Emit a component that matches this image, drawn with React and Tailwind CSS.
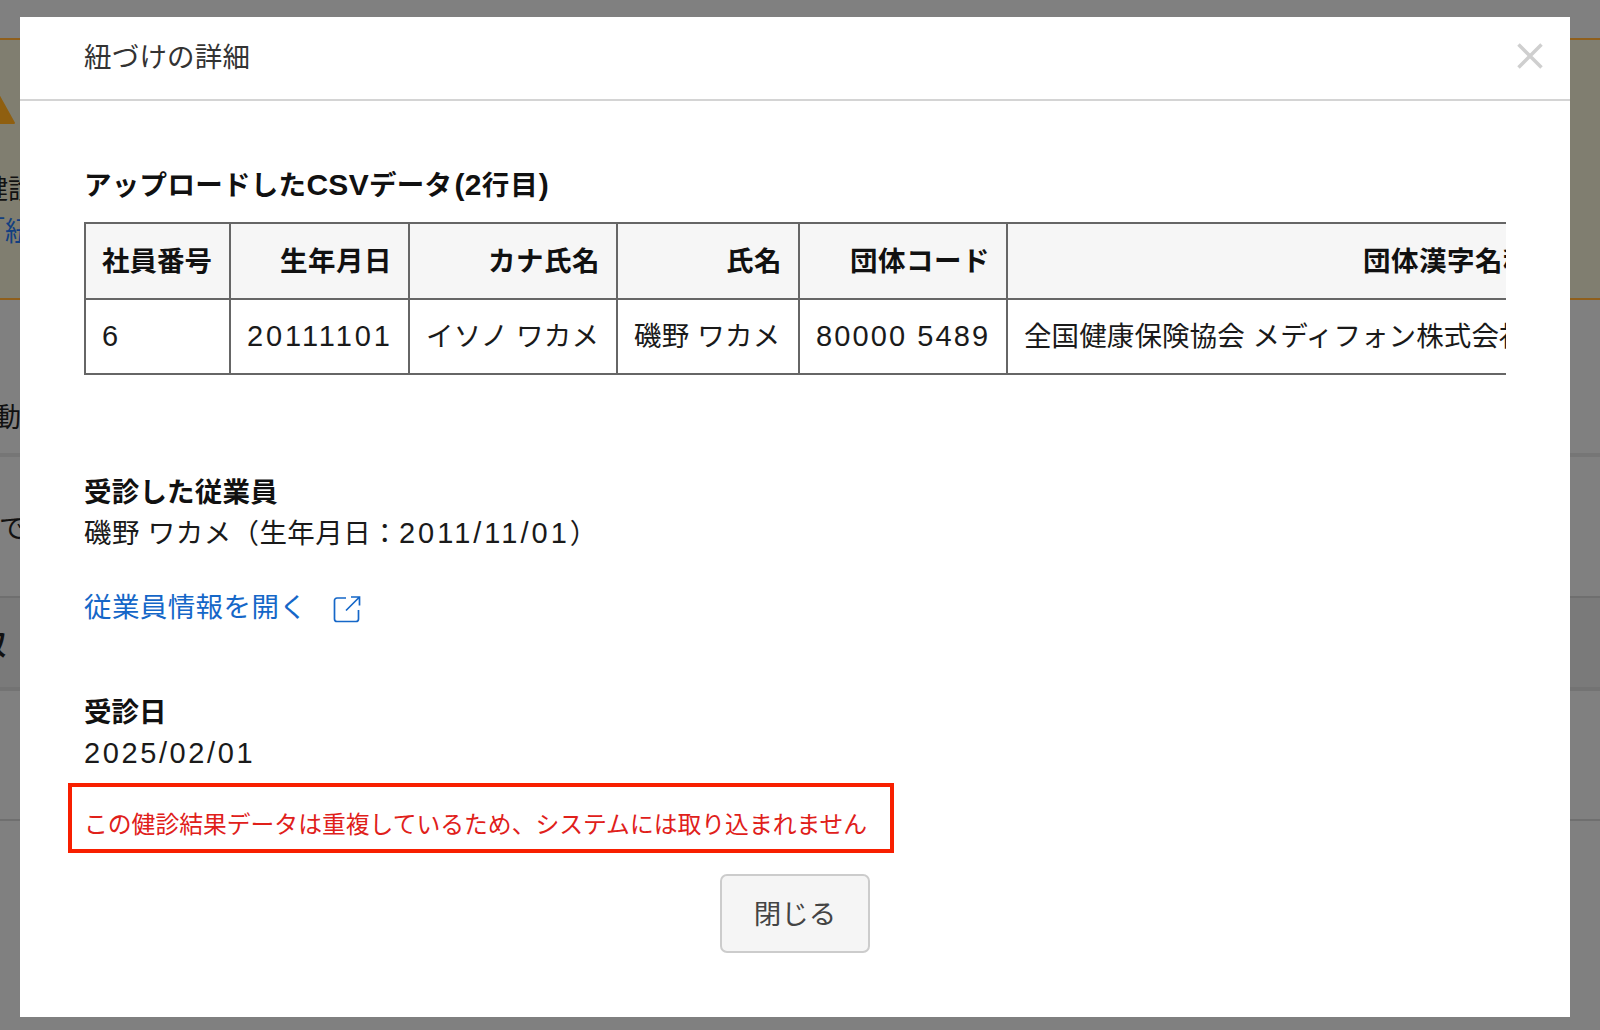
import React from "react";

const font = { fontFamily: '"Liberation Sans", "Noto Sans CJK JP", sans-serif' };

const headers = ["社員番号", "生年月日", "カナ氏名", "氏名", "団体コード", "団体漢字名称"];
const widths = ["w-[145px]", "w-[179px]", "w-[208px]", "w-[182px]", "w-[208px]", "w-[541px]"];

const Num = ({ children, className = "tracking-[2px]" }) => (
  <span className={`text-[29px] leading-none ${className}`}>{children}</span>
);

const Background = () => (
  <div className="flex h-[1030px] flex-col overflow-hidden bg-[#808080] text-[27px] text-[#111]">
    <div className="h-[38px] shrink-0" />
    <div className="h-[262px] shrink-0 border-y-2 border-[#8f5f1c] bg-[#807e70]">
      <svg className="-ml-[45px] mt-[30px] block" width="60" height="54" viewBox="0 0 60 54">
        <path d="M30 1 L59 53 L1 53 Z" fill="#8f5f10" stroke="#8f5f10" strokeWidth="2" strokeLinejoin="round" />
      </svg>
      <div className="-ml-[19px] mt-[46px] leading-[40px]">健診</div>
      <div className="-ml-[22px] mt-[2px] leading-[40px] text-[#123f80]">「紐</div>
    </div>
    <div className="h-[157px] shrink-0 border-b-4 border-[#767676] pt-[98px]">
      <div className="-ml-[6px] leading-[40px]">動</div>
    </div>
    <div className="h-[141px] shrink-0 border-b-2 border-[#6f6f6f] pt-[52px]">
      <div className="-ml-[1px] leading-[40px]">でき</div>
    </div>
    <div className="h-[93px] shrink-0 border-b-4 border-[#737373] bg-[#7a7a7a] pt-[28px]">
      <div className="-ml-[21px] font-bold leading-[40px]">収</div>
    </div>
    <div className="h-[130px] shrink-0 border-b-2 border-[#6f6f6f]" />
  </div>
);

const App = () => {
  return (
    <div className="relative h-[1030px] w-[1600px] overflow-hidden" style={font}>
      <Background />
      <div className="absolute left-[20px] top-[17px] h-[1000px] w-[1550px] bg-white text-[27.5px] text-[#1a1a1a]">
        <div className="flex h-[84px] items-center justify-between border-b-2 border-[#d4d4d4] pl-[64px] pr-[27px]">
          <h1 className="font-normal leading-[40px] tracking-[0.2px] text-[#333]">紐づけの詳細</h1>
          <svg width="26" height="26" viewBox="0 0 26 26" className="-mt-[4px]">
            <path d="M1.5 1.5 L24.5 24.5 M24.5 1.5 L1.5 24.5" stroke="#cfcfcf" strokeWidth="3.5" />
          </svg>
        </div>
        <div className="px-[64px] pt-[65px]">
          <h2 className="font-bold leading-[40px] tracking-[0.3px] text-[#111]">
            アップロードした<span className="text-[30px] leading-none">CSV</span>データ
            <span className="ml-[2px] text-[30px] leading-none">(2</span>
            <span className="tracking-[1px]">行目</span>
            <span className="text-[30px] leading-none">)</span>
          </h2>
          <div className="mt-[16px] w-[1422px] overflow-hidden">
            <table className="w-[1463px] table-fixed border-collapse">
              <thead>
                <tr className="h-[76px] bg-[#f6f6f6]">
                  {headers.map((h, i) => (
                    <th
                      key={h}
                      className={`${widths[i]} whitespace-nowrap border-2 border-[#666] px-[16px] pt-[1px] font-bold text-[#111] ${i === 0 ? "text-left" : "text-right tracking-[0.5px]"}`}
                    >
                      {h}
                    </th>
                  ))}
                </tr>
              </thead>
              <tbody>
                <tr className="h-[75px]">
                  <td className="border-2 border-[#666] px-[16px]"><Num>6</Num></td>
                  <td className="border-2 border-[#666] px-[16px]"><Num className="tracking-[2.9px]">20111101</Num></td>
                  <td className="whitespace-nowrap border-2 border-[#666] px-[16px] tracking-[0.2px]">イソノ ワカメ</td>
                  <td className="whitespace-nowrap border-2 border-[#666] px-[16px] tracking-[0.2px]">磯野 ワカメ</td>
                  <td className="whitespace-nowrap border-2 border-[#666] px-[16px]"><Num className="tracking-[2.1px]">80000 5489</Num></td>
                  <td className="whitespace-nowrap border-2 border-[#666] px-[16px] tracking-[0.1px]">全国健康保険協会 メディフォン株式会社</td>
                </tr>
              </tbody>
            </table>
          </div>

          <h3 className="mt-[98px] font-bold leading-[40px] tracking-[0.2px] text-[#111]">受診した従業員</h3>
          <p className="mt-[1px] leading-[40px] tracking-[0.4px]">
            磯野 ワカメ（生年月日：<Num className="tracking-[3px]">2011/11/01</Num>）
          </p>

          <a className="mt-[34px] flex h-[40px] items-center tracking-[0.4px] text-[#1567c8]">
            従業員情報を開く
            <svg className="ml-[26px] mt-[1px]" width="28" height="28" viewBox="0 0 28 28" fill="none" stroke="#1567c8" strokeWidth="1.7">
              <path d="M13 3 H4 a2.5 2.5 0 0 0 -2.5 2.5 V24 a2.5 2.5 0 0 0 2.5 2.5 H23 a2.5 2.5 0 0 0 2.5 -2.5 V15" />
              <path d="M13 15.5 L26 2.5 M18 2 H26.5 V10.5" />
            </svg>
          </a>

          <h3 className="mt-[65px] font-bold leading-[40px] text-[#111]">受診日</h3>
          <p className="mt-[1px] leading-[40px]"><Num className="tracking-[2.6px]">2025/02/01</Num></p>

          <div className="-ml-[16px] mt-[9px] h-[70px] w-[826px] border-4 border-[#f81f00] pl-[12px] pt-[20px] text-[23.8px] leading-[36px] text-[#e0201a]">
            この健診結果データは重複しているため、システムには取り込まれません
          </div>

          <button className="mx-auto mt-[21px] block h-[79px] w-[150px] rounded-[7px] border-2 border-[#ccc] bg-[#f5f5f5] pt-[2px] text-[#444]">
            閉じる
          </button>
        </div>
      </div>
    </div>
  );
};

export default App;
